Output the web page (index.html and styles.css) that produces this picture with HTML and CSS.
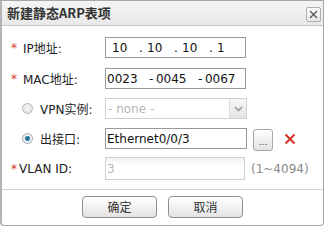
FILE: index.html
```html
<!DOCTYPE html>
<html lang="zh-CN">
<head>
<meta charset="utf-8">
<title>新建静态ARP表项</title>
<link rel="stylesheet" href="styles.css">
</head>
<body>
<div class="dialog">
  <div class="titlebar">
    <span class="title">新建静态ARP表项</span>
    <span class="close">
      <svg width="9" height="9" viewBox="0 0 9 9"><path d="M1 1L8 8M8 1L1 8" stroke="#555" stroke-width="1.3" fill="none"/></svg>
    </span>
  </div>
  <div class="body">
    <div class="row row-first">
      <div class="label"><span class="star">*</span>IP地址:</div>
      <div class="input">
        <span class="oct">10</span><span class="dot">.</span><span class="oct">10</span><span class="dot">.</span><span class="oct">10</span><span class="dot">.</span><span class="oct">1</span>
      </div>
    </div>
    <div class="row">
      <div class="label"><span class="star">*</span>MAC地址:</div>
      <div class="input input-mac">
        <span class="grp">0023</span><span class="sep">-</span><span class="grp">0045</span><span class="sep">-</span><span class="grp">0067</span>
      </div>
    </div>
    <div class="row">
      <div class="label"><span class="radio"></span>VPN实例:</div>
      <div class="select">
        <span class="select-text">- none -</span>
        <span class="select-arrow">
          <svg width="9" height="6" viewBox="0 0 9 6"><path d="M1 1L4.5 4.5L8 1" stroke="#999" stroke-width="1.6" fill="none"/></svg>
        </span>
      </div>
    </div>
    <div class="row">
      <div class="label"><span class="radio radio-on"></span>出接口:</div>
      <div class="input input-text">Ethernet0/0/3</div>
      <span class="browse">...</span>
      <span class="remove">
        <svg width="12" height="12" viewBox="0 0 12 12"><path d="M1.5 1.5L10.5 10.5M10.5 1.5L1.5 10.5" stroke="#d8392c" stroke-width="2.2" fill="none"/></svg>
      </span>
    </div>
    <div class="row">
      <div class="label label-tight"><span class="star">*</span>VLAN ID:</div>
      <div class="input input-disabled">3</div>
      <span class="hint">(1~4094)</span>
    </div>
  </div>
  <div class="footer">
    <button class="btn">确定</button>
    <button class="btn">取消</button>
  </div>
</div>
</body>
</html>
```
FILE: styles.css
```css
html, body {
  margin: 0;
  padding: 0;
  background: #ffffff;
}
body {
  font-family: "DejaVu Sans", "Noto Sans CJK SC", sans-serif;
  font-size: 12px;
  color: #222;
}
.dialog {
  box-sizing: border-box;
  width: 324px;
  height: 226px;
  border: 1px solid #a8a8a8;
  border-left: 2px solid #b4b4b4;
  border-radius: 0 0 4px 4px;
  background: #fff;
  display: flex;
  flex-direction: column;
}
.titlebar {
  height: 24px;
  border-bottom: 1px solid #c8c8c8;
  background: linear-gradient(#f4f4f4, #e8e8e8);
  display: flex;
  align-items: center;
  justify-content: space-between;
  padding: 0 2px 0 5px;
}
.title {
  font-family: "Noto Sans CJK SC", "DejaVu Sans", sans-serif;
  font-weight: bold;
  font-size: 13px;
  color: #333;
  line-height: 24px;
}
.close {
  box-sizing: border-box;
  width: 15px;
  height: 15px;
  border: 1px solid #b0b0b0;
  border-radius: 2px;
  background: linear-gradient(#fdfdfd, #e6e6e6);
  display: flex;
  align-items: center;
  justify-content: center;
  margin-top: 3px;
}
.body {
  padding: 11px 0 10px 8px;
  display: flex;
  flex-direction: column;
  gap: 9px;
}
.row {
  display: flex;
  align-items: center;
  height: 21px;
}
.row-first {
  margin-bottom: 1px;
}
.label {
  width: 95px;
  flex: none;
  display: flex;
  align-items: center;
  color: #222;
  white-space: nowrap;
}
.star {
  color: #d8392c;
  margin-left: 1px;
  margin-right: 6px;
}
.label-tight .star {
  margin-right: 2px;
}
.radio {
  box-sizing: border-box;
  width: 11px;
  height: 11px;
  border-radius: 50%;
  border: 1px solid #b5b5b5;
  background: radial-gradient(circle at 50% 40%, #fafafa, #d9d9d9);
  margin-left: 12px;
  margin-right: 7px;
}
.radio-on {
  border-color: #9aa7b0;
  background: radial-gradient(circle, #1d5f7e 0, #3c8eb0 2.2px, #e9eef1 3px, #f4f4f4 5px);
}
.input {
  box-sizing: border-box;
  width: 141px;
  height: 21px;
  border: 1px solid #999;
  background: #fff;
  display: flex;
  align-items: center;
  padding-left: 6px;
  font-size: 12px;
  color: #111;
  white-space: nowrap;
}
.oct {
  width: 27px;
}
.dot {
  width: 8px;
}
.input-mac {
  padding-left: 1px;
}
.grp {
  width: 41px;
}
.sep {
  width: 7px;
  padding-left: 2px;
}
.input-text {
  padding-left: 1px;
  width: 142px;
}
.input-disabled {
  border-color: #cfcfcf;
  background: linear-gradient(#f3f3f3, #ffffff 40%);
  color: #b8b8b8;
  padding-left: 1px;
  width: 140px;
  height: 23px;
}
.select {
  box-sizing: border-box;
  width: 142px;
  height: 21px;
  border: 1px solid #d0d0d0;
  display: flex;
  align-items: center;
  justify-content: space-between;
}
.select-text {
  color: #b4b4b4;
  padding-left: 2px;
}
.select-arrow {
  width: 16px;
  height: 19px;
  border-left: 1px solid #dcdcdc;
  background: linear-gradient(#f7f7f7, #e4e4e4);
  display: flex;
  align-items: center;
  justify-content: center;
}
.browse {
  box-sizing: border-box;
  width: 20px;
  height: 22px;
  margin-left: 6px;
  border: 1px solid #a8a8a8;
  border-radius: 3px;
  background: linear-gradient(#ffffff, #e2e2e2);
  display: flex;
  align-items: flex-end;
  justify-content: center;
  font-size: 9px;
  line-height: 15px;
  color: #444;
  margin-top: 2px;
}
.remove {
  margin-left: 11px;
  display: flex;
  align-items: center;
}
.hint {
  margin-left: 6px;
  color: #888;
}
.footer {
  flex: 1;
  border-top: 1px solid #d4d4d4;
  display: flex;
  justify-content: center;
  align-items: flex-start;
  gap: 11px;
  padding-top: 6px;
}
.btn {
  box-sizing: border-box;
  width: 75px;
  height: 22px;
  border: 1px solid #8f8f8f;
  border-radius: 4px;
  background: linear-gradient(#ffffff, #e4e4e4);
  font-family: "Noto Sans CJK SC", "DejaVu Sans", sans-serif;
  font-size: 12px;
  color: #333;
  padding: 0;
  line-height: 20px;
}
```
